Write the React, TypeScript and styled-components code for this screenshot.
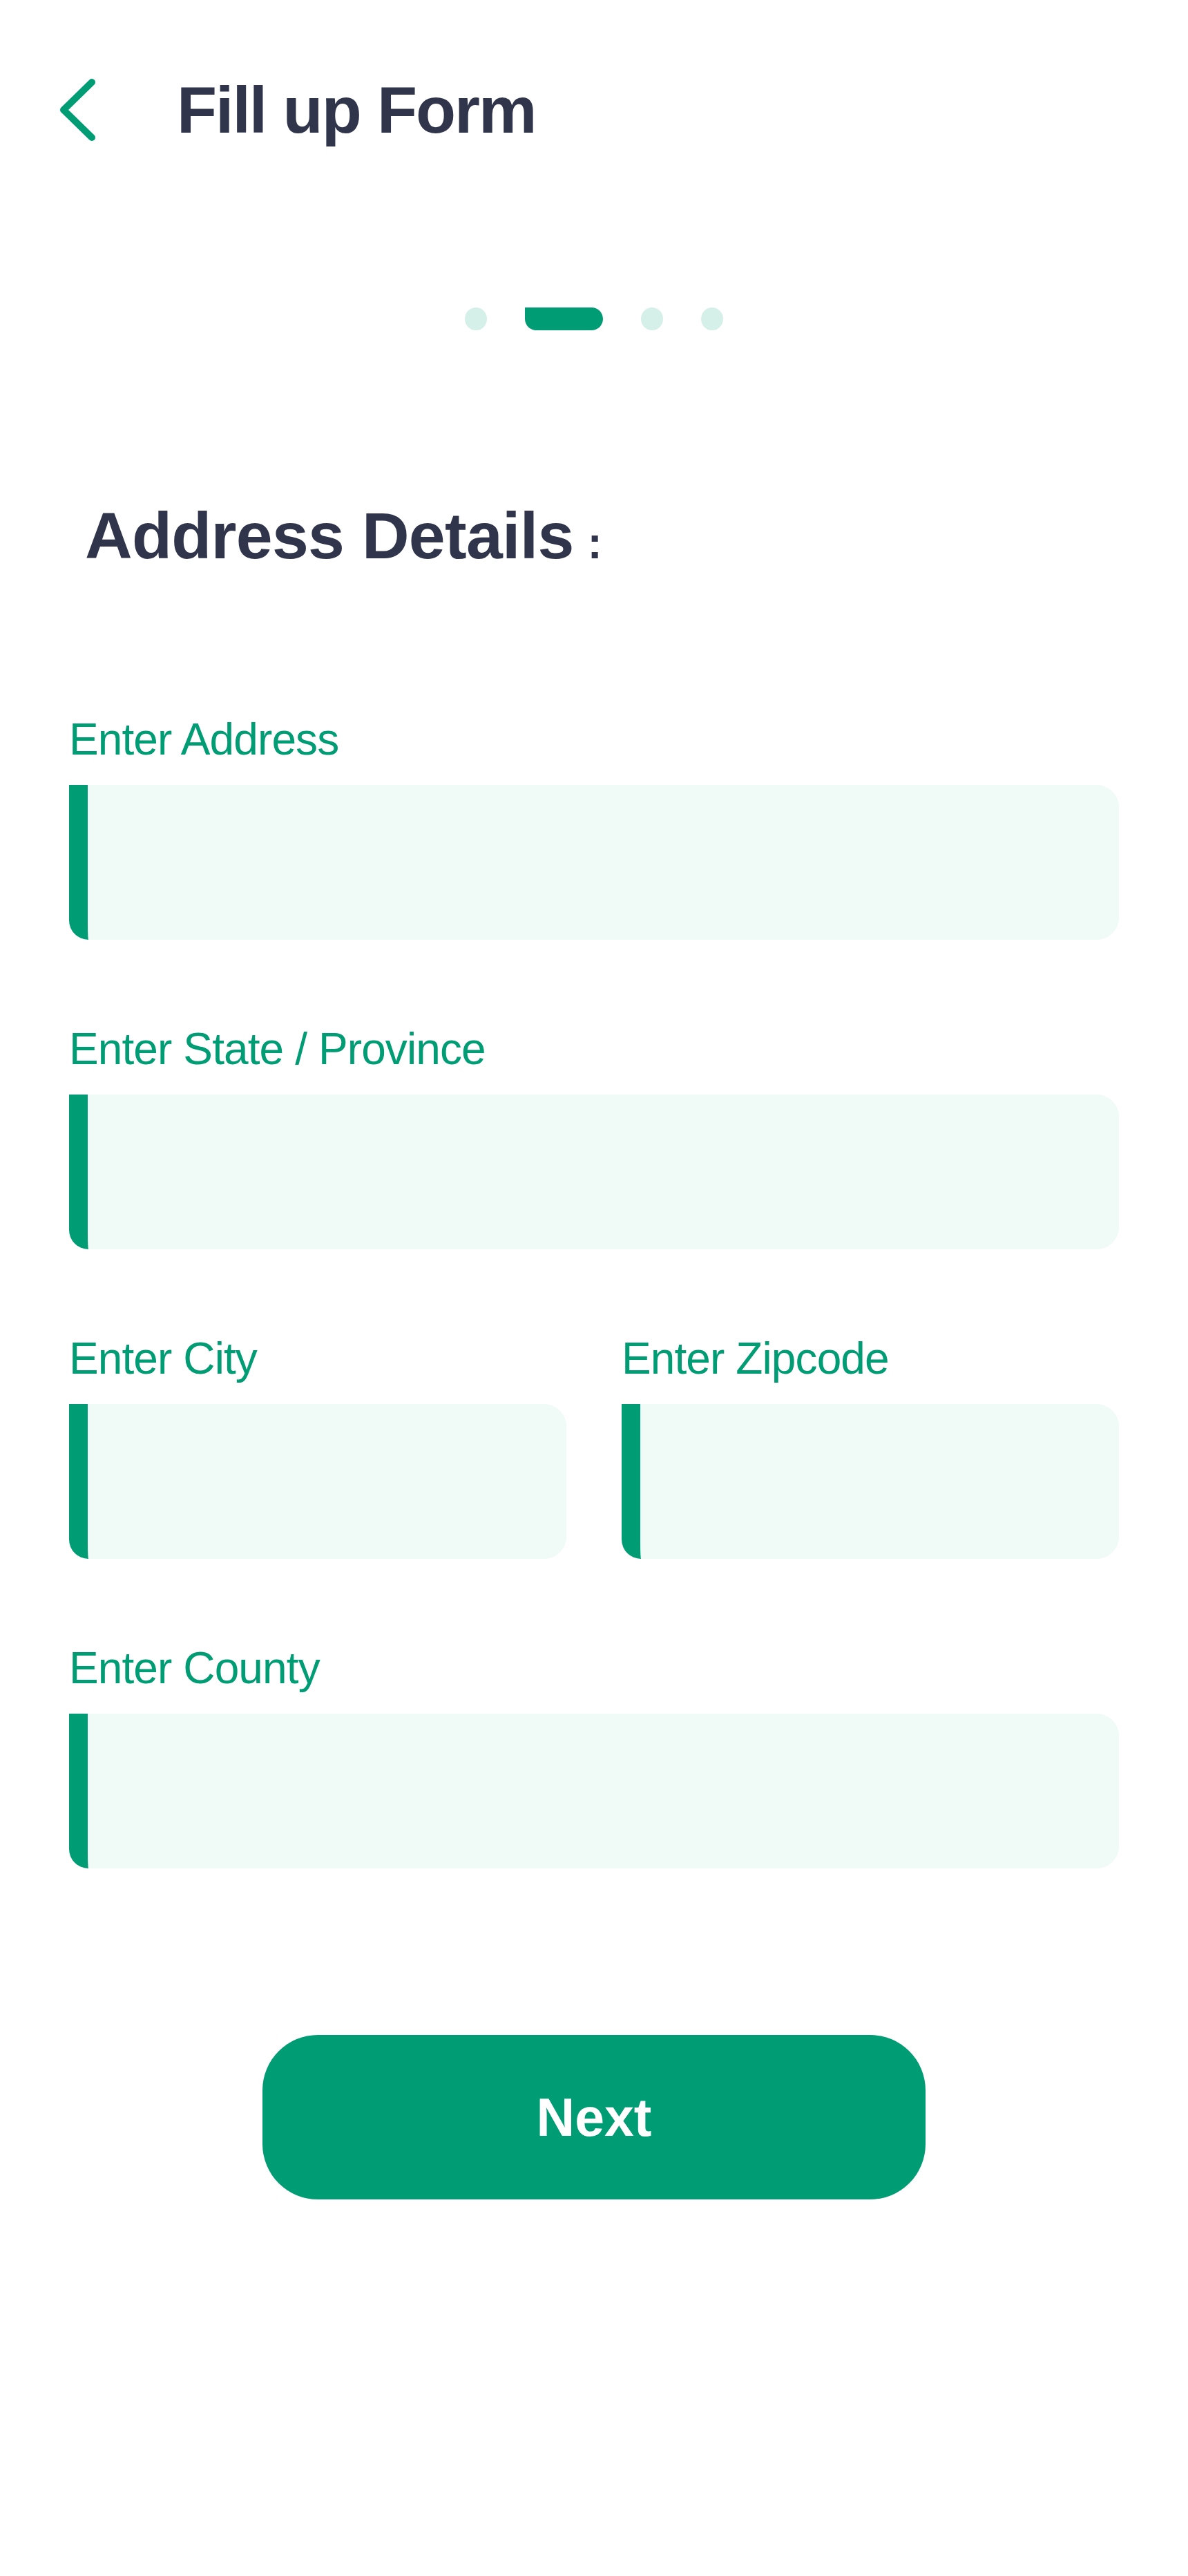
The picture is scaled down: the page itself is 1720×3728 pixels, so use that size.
import React from "react";
import styled, { createGlobalStyle } from "styled-components";

const GREEN = "#009C74";
const DARK = "#30354C";
const FIELD_BG = "#F0FAF6";
const DOT_LIGHT = "#D5F0E8";

const GlobalStyle = createGlobalStyle`
  html, body {
    margin: 0;
    padding: 0;
    background: #ffffff;
  }
  body {
    font-family: "Liberation Sans", Arial, sans-serif;
  }
  * { box-sizing: border-box; }
`;

const Page = styled.main`
  width: 1720px;
  min-height: 3728px;
  padding-top: 109px;
  background: #ffffff;
`;

const Header = styled.header`
  display: flex;
  align-items: center;
  height: 100px;
  padding-left: 84px;
  gap: 116px;
`;

const BackButton = styled.button`
  display: flex;
  padding: 0;
  border: none;
  background: none;
  cursor: pointer;
`;

const Title = styled.h1`
  margin: 0;
  font-size: 95px;
  line-height: 1;
  font-weight: 700;
  letter-spacing: -2px;
  color: ${DARK};
`;

const Pager = styled.div`
  display: flex;
  justify-content: center;
  align-items: center;
  gap: 55px;
  margin-top: 236px;
  height: 33px;
`;

const Dot = styled.span<{ $active?: boolean }>`
  display: block;
  height: 33px;
  width: ${(p) => (p.$active ? "113px" : "32px")};
  border-radius: ${(p) => (p.$active ? "0 17px 17px 17px" : "50%")};
  background: ${(p) => (p.$active ? GREEN : DOT_LIGHT)};
`;

const Form = styled.form`
  display: flex;
  flex-direction: column;
  padding: 0 100px;
`;

const SectionTitle = styled.h2`
  margin: 250px 0 0 23px;
  font-size: 95px;
  line-height: 1;
  font-weight: 700;
  letter-spacing: -0.7px;
  color: ${DARK};
`;

const Colon = styled.span`
  font-size: 64px;
  margin-left: 20px;
  letter-spacing: 0;
`;

const Fields = styled.div`
  display: flex;
  flex-direction: column;
  gap: 126px;
  margin-top: 215px;
`;

const Row = styled.div`
  display: grid;
  grid-template-columns: 1fr 1fr;
  column-gap: 80px;
`;

const FieldGroup = styled.label`
  display: flex;
  flex-direction: column;
  gap: 34px;
`;

const Label = styled.span`
  font-size: 64px;
  line-height: 1;
  letter-spacing: -0.9px;
  color: ${GREEN};
`;

const Input = styled.input`
  display: block;
  width: 100%;
  height: 224px;
  margin: 0;
  padding: 0 40px;
  border: none;
  border-left: 27px solid ${GREEN};
  border-radius: 0 32px 32px 28px;
  background: ${FIELD_BG};
  font-family: inherit;
  font-size: 56px;
  color: ${DARK};
  outline: none;
`;

const NextButton = styled.button`
  display: flex;
  align-items: center;
  justify-content: center;
  align-self: center;
  width: 960px;
  height: 238px;
  margin-top: 241px;
  border: none;
  border-radius: 80px;
  background: ${GREEN};
  color: #ffffff;
  font-family: inherit;
  font-size: 77px;
  font-weight: 700;
  cursor: pointer;
`;

const ChevronLeft = () => (
  <svg width="56" height="100" viewBox="0 0 56 100" fill="none">
    <path
      d="M49 10 L8 50 L49 90"
      stroke={GREEN}
      strokeWidth="10"
      strokeLinecap="round"
      strokeLinejoin="round"
    />
  </svg>
);

const Field = ({ label }: { label: string }) => (
  <FieldGroup>
    <Label>{label}</Label>
    <Input type="text" />
  </FieldGroup>
);

export default function App() {
  return (
    <>
      <GlobalStyle />
      <Page>
        <Header>
          <BackButton type="button" aria-label="Back">
            <ChevronLeft />
          </BackButton>
          <Title>Fill up Form</Title>
        </Header>

        <Pager>
          <Dot />
          <Dot $active />
          <Dot />
          <Dot />
        </Pager>

        <Form onSubmit={(e) => e.preventDefault()}>
          <SectionTitle>
            Address Details<Colon>:</Colon>
          </SectionTitle>

          <Fields>
            <Field label="Enter Address" />
            <Field label="Enter State / Province" />
            <Row>
              <Field label="Enter City" />
              <Field label="Enter Zipcode" />
            </Row>
            <Field label="Enter County" />
          </Fields>

          <NextButton type="submit">Next</NextButton>
        </Form>
      </Page>
    </>
  );
}
